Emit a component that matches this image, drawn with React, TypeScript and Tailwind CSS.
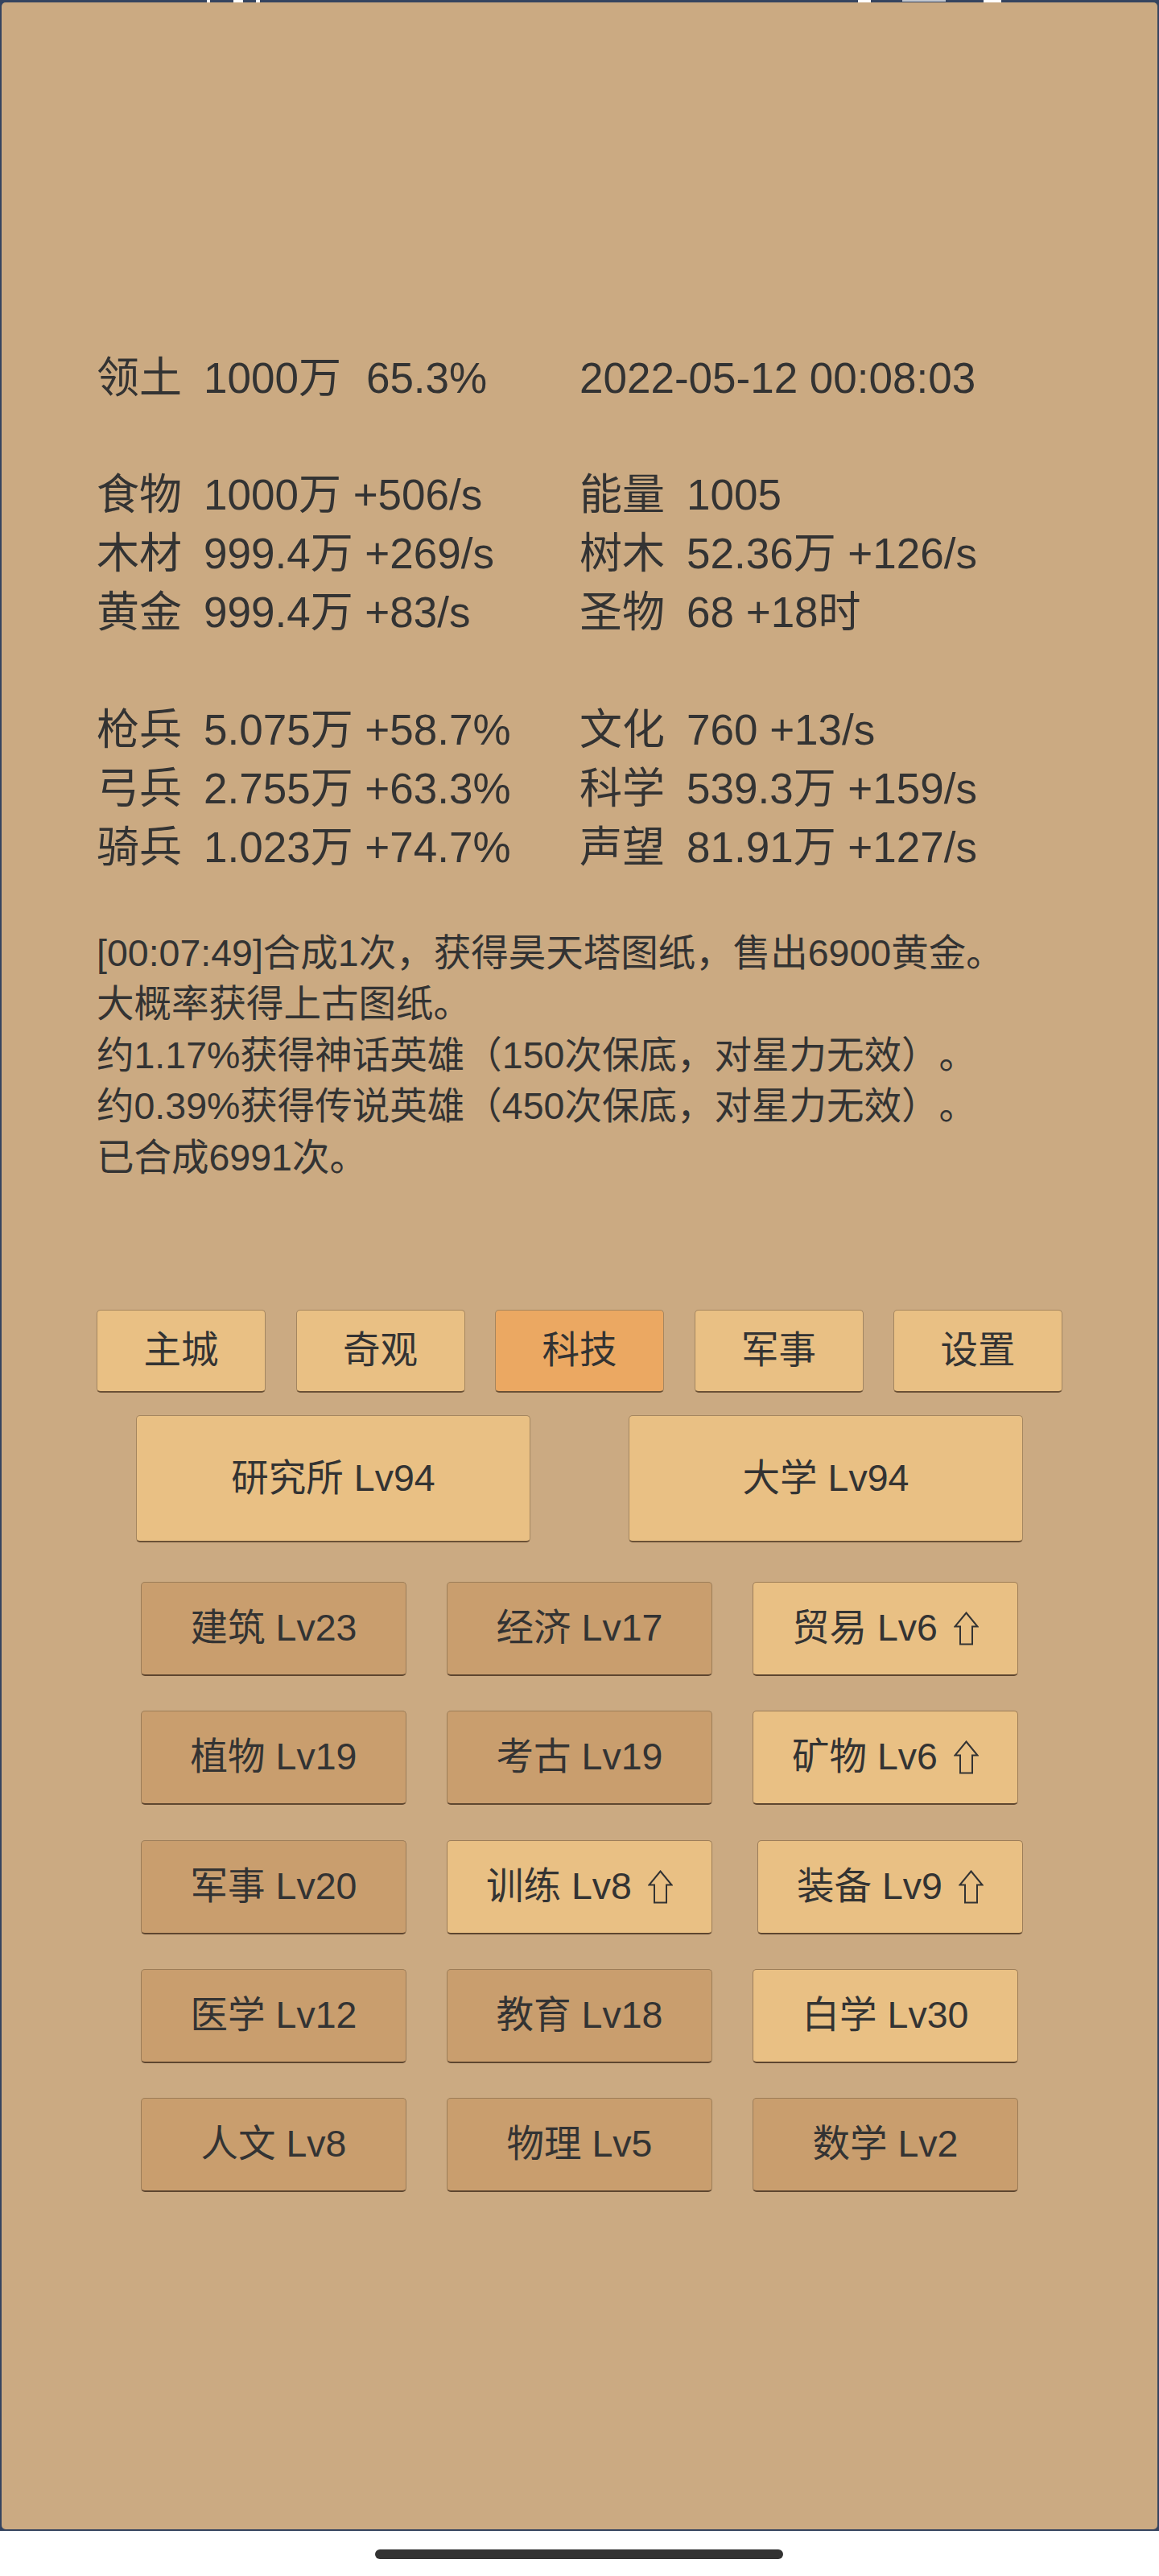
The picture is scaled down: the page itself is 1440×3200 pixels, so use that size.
import React from "react";

type Cell = { label: string; value: string; extra?: string };

const leftRows: (Cell | null)[] = [
  { label: "领土", value: "1000万", extra: "65.3%" },
  null,
  { label: "食物", value: "1000万 +506/s" },
  { label: "木材", value: "999.4万 +269/s" },
  { label: "黄金", value: "999.4万 +83/s" },
  null,
  { label: "枪兵", value: "5.075万 +58.7%" },
  { label: "弓兵", value: "2.755万 +63.3%" },
  { label: "骑兵", value: "1.023万 +74.7%" },
];

const rightRows: (Cell | string | null)[] = [
  "2022-05-12 00:08:03",
  null,
  { label: "能量", value: "1005" },
  { label: "树木", value: "52.36万 +126/s" },
  { label: "圣物", value: "68 +18时" },
  null,
  { label: "文化", value: "760 +13/s" },
  { label: "科学", value: "539.3万 +159/s" },
  { label: "声望", value: "81.91万 +127/s" },
];

const messages = [
  "[00:07:49]合成1次，获得昊天塔图纸，售出6900黄金。",
  "大概率获得上古图纸。",
  "约1.17%获得神话英雄（150次保底，对星力无效）。",
  "约0.39%获得传说英雄（450次保底，对星力无效）。",
  "已合成6991次。",
];

const tabs = ["主城", "奇观", "科技", "军事", "设置"];

type Tech = { name: string; up?: boolean; light?: boolean; shift?: boolean };
const techs: Tech[] = [
  { name: "建筑 Lv23" },
  { name: "经济 Lv17" },
  { name: "贸易 Lv6", up: true, light: true },
  { name: "植物 Lv19" },
  { name: "考古 Lv19" },
  { name: "矿物 Lv6", up: true, light: true },
  { name: "军事 Lv20" },
  { name: "训练 Lv8", up: true, light: true },
  { name: "装备 Lv9", up: true, light: true, shift: true },
  { name: "医学 Lv12" },
  { name: "教育 Lv18" },
  { name: "白学 Lv30", light: true },
  { name: "人文 Lv8" },
  { name: "物理 Lv5" },
  { name: "数学 Lv2" },
];

function UpArrow() {
  return (
    <svg width="31" height="42" viewBox="0 0 31 42" className="ml-[20px] shrink-0">
      <path
        d="M15.5 1.5 L29.5 18.5 L23 18.5 L23 40.5 L8 40.5 L8 18.5 L1.5 18.5 Z"
        fill="none"
        stroke="#333333"
        strokeWidth="2"
        strokeLinejoin="miter"
      />
    </svg>
  );
}

function StatCell({ cell }: { cell: Cell }) {
  return (
    <div className="flex items-center h-full whitespace-nowrap">
      <span className="inline-block w-[106px]">{cell.label}</span>
      <span className="ml-[27px]">{cell.value}</span>
      {cell.extra && <span className="ml-[31px]">{cell.extra}</span>}
    </div>
  );
}

export default function App() {
  return (
    <div className="relative w-[1440px] h-[3200px] bg-white font-['Liberation_Sans','Noto_Sans_CJK_SC',sans-serif] text-[#333333] [text-spacing-trim:space-all]">
      {/* status bar remnants */}
      <div className="absolute top-0 left-[257px] w-[4px] h-[3px] bg-white z-10" />
      <div className="absolute top-0 left-[290px] w-[12px] h-[3px] bg-white z-10" />
      <div className="absolute top-0 left-[318px] w-[5px] h-[3px] bg-white z-10" />
      <div className="absolute top-0 left-[1066px] w-[16px] h-[3px] bg-white z-10" />
      <div className="absolute top-0 left-[1121px] w-[54px] h-[2px] bg-white/70 z-10" />
      <div className="absolute top-0 left-[1222px] w-[22px] h-[3px] bg-white z-10" />

      <div className="h-[3144px] bg-[#35445f] pt-[3px] px-[2px] pb-[2px]">
        <div className="h-full bg-[#cbaa82] rounded-[5px] px-[118px] pt-[430px]">
          {/* stats */}
          <div className="grid grid-cols-2 text-[53px]">
            <div className="flex flex-col">
              {leftRows.map((r, i) => (
                <div key={i} className="h-[72.9px]">
                  {r && <StatCell cell={r} />}
                </div>
              ))}
            </div>
            <div className="flex flex-col">
              {rightRows.map((r, i) => (
                <div key={i} className="h-[72.9px]">
                  {r === null ? null : typeof r === "string" ? (
                    <div className="flex items-center h-full whitespace-nowrap">{r}</div>
                  ) : (
                    <StatCell cell={r} />
                  )}
                </div>
              ))}
            </div>
          </div>

          {/* messages */}
          <div className="mt-[64px] text-[46.5px]">
            {messages.map((m, i) => (
              <div key={i} className="h-[63.5px] flex items-center whitespace-nowrap">
                {m}
              </div>
            ))}
          </div>

          {/* tabs */}
          <div className="mt-[156.5px] grid grid-cols-5 gap-x-[37.5px] text-[46.5px]">
            {tabs.map((t) => (
              <div
                key={t}
                className={
                  "h-[103px] flex items-center justify-center rounded-[5px] border border-[#a4865f] border-b-2 border-b-[#6b5136] " +
                  (t === "科技" ? "bg-[#eba862]" : "bg-[#e9c084]")
                }
              >
                {t}
              </div>
            ))}
          </div>

          {/* big buttons */}
          <div className="mt-[28px] flex justify-between px-[49px] text-[46.5px]">
            {["研究所 Lv94", "大学 Lv94"].map((t) => (
              <div
                key={t}
                className="w-[490px] h-[158px] flex items-center justify-center rounded-[5px] border border-[#a4865f] border-b-2 border-b-[#6b5136] bg-[#e9c084]"
              >
                {t}
              </div>
            ))}
          </div>

          {/* tech grid */}
          <div className="mt-[49px] px-[55px] grid grid-cols-3 gap-x-[50px] gap-y-[43.3px] text-[46.5px]">
            {techs.map((t) => (
              <div
                key={t.name}
                className={
                  "h-[117px] flex items-center justify-center rounded-[5px] border border-[#9c7d58] border-b-2 border-b-[#5e4630] whitespace-nowrap " +
                  (t.light ? "bg-[#e9c084] " : "bg-[#c99e6e] ") +
                  (t.shift ? "translate-x-[6px]" : "")
                }
              >
                <span>{t.name}</span>
                {t.up && <UpArrow />}
              </div>
            ))}
          </div>
        </div>
      </div>

      {/* home indicator */}
      <div className="absolute left-[466px] top-[3167px] w-[507px] h-[12px] rounded-full bg-[#333333]" />
    </div>
  );
}
